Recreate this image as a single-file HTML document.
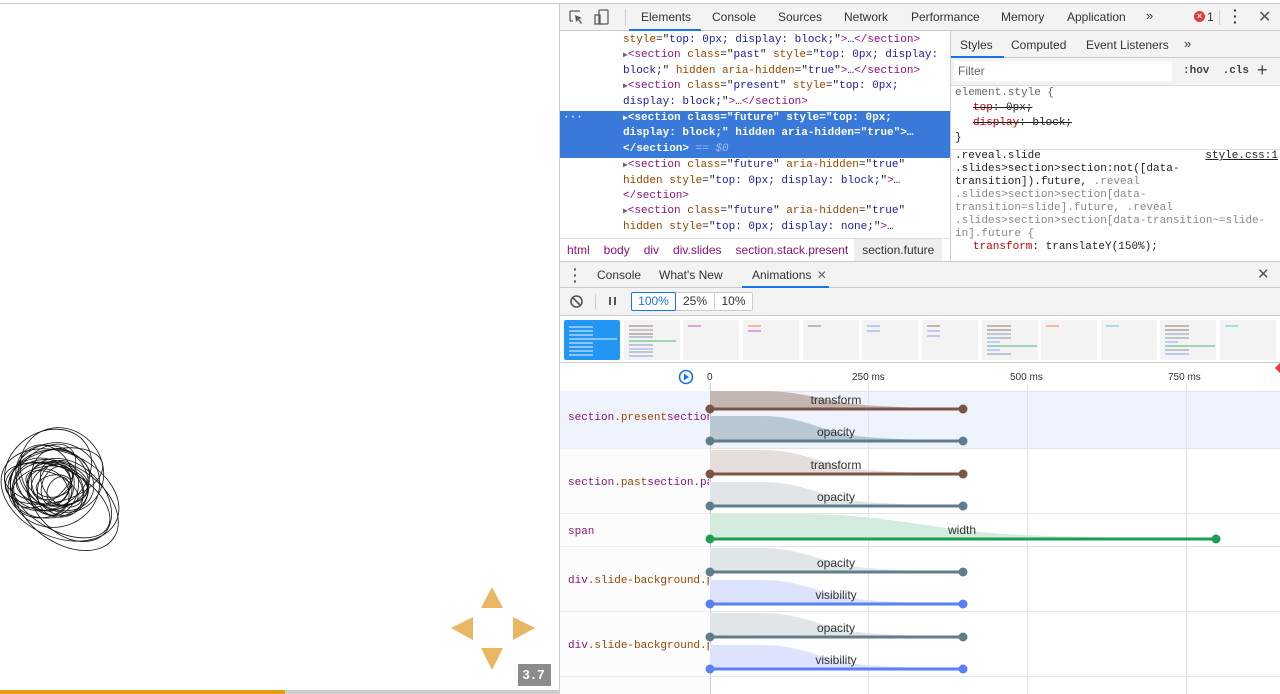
<!DOCTYPE html>
<html><head><meta charset="utf-8">
<style>
*{margin:0;padding:0;box-sizing:border-box}
body{width:1280px;height:694px;overflow:hidden;position:relative;background:#fff;font-family:"Liberation Sans",sans-serif;font-size:12px;color:#333}
.a{position:absolute}
.mono{font-family:"Liberation Mono",monospace;font-size:11px}
.tag{color:#881280}.at{color:#994500}.av{color:#1a1aa6}
.tab{position:absolute;top:10px;font-size:12px;color:#333}
.pv{position:absolute;top:320px;width:56px;height:40px;background:#f3f3f3;border-radius:2px}
.pv i{position:absolute;left:5px;height:2px;display:block}
</style></head><body>
<div class="a" style="left:0;top:3px;width:1280px;height:1px;background:#ccc"></div>

<svg class="a" style="left:0;top:420px" width="140" height="145" viewBox="0 420 140 145" fill="none" stroke="#111" stroke-width="0.8">
<ellipse cx="55" cy="485" rx="45" ry="42" transform="rotate(-20 55 485)"/>
<ellipse cx="60" cy="495" rx="62" ry="42" transform="rotate(25 60 495)"/>
<ellipse cx="50" cy="480" rx="40" ry="30" transform="rotate(-10 50 480)"/>
<ellipse cx="55" cy="490" rx="30" ry="25" transform="rotate(40 55 490)"/>
<ellipse cx="48" cy="470" rx="46" ry="38" transform="rotate(-35 48 470)"/>
<ellipse cx="58" cy="488" rx="20" ry="28" transform="rotate(15 58 488)"/>
<ellipse cx="52" cy="484" rx="36" ry="22" transform="rotate(5 52 484)"/>
<ellipse cx="60" cy="500" rx="55" ry="30" transform="rotate(30 60 500)"/>
<ellipse cx="45" cy="478" rx="28" ry="34" transform="rotate(-25 45 478)"/>
<ellipse cx="56" cy="486" rx="14" ry="20" transform="rotate(20 56 486)"/>
<ellipse cx="50" cy="492" rx="38" ry="26" transform="rotate(-5 50 492)"/>
<ellipse cx="62" cy="484" rx="26" ry="18" transform="rotate(50 62 484)"/>
<ellipse cx="54" cy="476" rx="50" ry="26" transform="rotate(-15 54 476)"/>
<ellipse cx="40" cy="488" rx="32" ry="30"/>
<ellipse cx="58" cy="490" rx="10" ry="14" transform="rotate(30 58 490)"/>
<ellipse cx="52" cy="482" rx="22" ry="16" transform="rotate(-30 52 482)"/>
<ellipse cx="66" cy="505" rx="58" ry="38" transform="rotate(35 66 505)"/>
<ellipse cx="46" cy="484" rx="42" ry="20" transform="rotate(10 46 484)"/>
<ellipse cx="62" cy="470" rx="40" ry="44" transform="rotate(-40 62 470)"/>
<ellipse cx="48" cy="492" rx="24" ry="20" transform="rotate(60 48 492)"/>
<ellipse cx="54" cy="486" rx="18" ry="11" transform="rotate(-10 54 486)"/>
<ellipse cx="60" cy="482" rx="34" ry="28" transform="rotate(70 60 482)"/>
<ellipse cx="44" cy="476" rx="38" ry="24" transform="rotate(-45 44 476)"/>
<ellipse cx="70" cy="500" rx="48" ry="34" transform="rotate(45 70 500)"/>
<ellipse cx="52" cy="488" rx="28" ry="14" transform="rotate(25 52 488)"/>
<ellipse cx="56" cy="478" rx="30" ry="40" transform="rotate(-60 56 478)"/>
</svg>
<svg class="a" style="left:450px;top:586px" width="90" height="86">
<polygon points="42,1 53,22 31,22" fill="#e9b764"/>
<polygon points="1,42 23,31 23,54" fill="#e9b764"/>
<polygon points="85,42 63,31 63,54" fill="#e9b764"/>
<polygon points="31,62 53,62 42,84" fill="#e9b764"/>
</svg>
<div class="a" style="left:518px;top:664px;width:33px;height:22px;background:#8c8c8c;color:#fff;font-weight:bold;font-size:13px;text-align:center;line-height:22px;letter-spacing:2px">3.7</div>
<div class="a" style="left:0;top:690px;width:285px;height:4px;background:#e39d12"></div>
<div class="a" style="left:285px;top:690px;width:274px;height:4px;background:#ccc"></div>

<div class="a" style="left:559px;top:4px;width:721px;height:690px;background:#fff;border-left:1px solid #ccc"></div>
<div class="a" style="left:560px;top:4px;width:720px;height:27px;background:#f3f3f3;border-bottom:1px solid #ccc"></div>
<svg class="a" style="left:568px;top:9px" width="44" height="18" fill="none" stroke="#5a5a5a" stroke-width="1.3">
<path d="M2 2h10M2 2v10M2 12h3" /><path d="M7 6l7 3-3 1 3 4-1 1-3-4-2 2z" fill="#5a5a5a" stroke="none"/>
<rect x="31" y="1" width="9" height="14" rx="1"/><rect x="27" y="6" width="5" height="9"/>
</svg>
<div class="a" style="left:625px;top:9px;width:1px;height:17px;background:#ccc"></div>
<div class="tab" style="left:641px">Elements</div>
<div class="a" style="left:629px;top:29px;width:72px;height:2px;background:#1a73e8"></div>
<div class="tab" style="left:712px">Console</div>
<div class="tab" style="left:778px">Sources</div>
<div class="tab" style="left:844px">Network</div>
<div class="tab" style="left:911px">Performance</div>
<div class="tab" style="left:1001px">Memory</div>
<div class="tab" style="left:1067px">Application</div>
<div class="tab" style="left:1146px;font-size:13px;top:8px">»</div>
<div class="a" style="left:1194px;top:11px;width:11px;height:11px;border-radius:50%;background:#e53935;color:#fff;font-size:9px;line-height:11px;text-align:center;font-weight:bold">×</div>
<div class="tab" style="left:1207px">1</div>
<div class="a" style="left:1219px;top:10px;width:1px;height:15px;background:#ccc"></div>
<div class="tab" style="left:1233px;font-weight:bold;font-size:14px;top:7px;line-height:6px">·<br>·<br>·</div>
<div class="tab" style="left:1258px;font-size:16px;top:7px;color:#555">✕</div>

<div class="a mono" style="left:560px;top:33px;width:390px;line-height:15.4px;color:#222">
<div style="padding-left:63px"><span class="at">style</span>="<span class="av">top: 0px; display: block;</span>"<span class="tag">&gt;</span>…<span class="tag">&lt;/section&gt;</span></div>
<div style="padding-left:63px"><span style="color:#666;font-size:8px">▶</span><span class="tag">&lt;section</span> <span class="at">class</span>="<span class="av">past</span>" <span class="at">style</span>="<span class="av">top: 0px; display:</span></div>
<div style="padding-left:63px"><span class="av">block;</span>" <span class="at">hidden aria-hidden</span>="<span class="av">true</span>"<span class="tag">&gt;</span>…<span class="tag">&lt;/section&gt;</span></div>
<div style="padding-left:63px"><span style="color:#666;font-size:8px">▶</span><span class="tag">&lt;section</span> <span class="at">class</span>="<span class="av">present</span>" <span class="at">style</span>="<span class="av">top: 0px;</span></div>
<div style="padding-left:63px"><span class="av">display: block;</span>"<span class="tag">&gt;</span>…<span class="tag">&lt;/section&gt;</span></div>
<div style="background:#3879d9;color:#fff;font-weight:bold;margin-top:1px;padding-bottom:1px">
<div style="padding-left:63px;position:relative"><span style="position:absolute;left:3px;font-weight:normal">···</span><span style="font-size:8px">▶</span>&lt;section class="future" style="top: 0px;</div>
<div style="padding-left:63px">display: block;" hidden aria-hidden="true"&gt;…</div>
<div style="padding-left:63px">&lt;/section&gt; <span style="color:#9ec1f5;font-weight:normal">== <i>$0</i></span></div></div>
<div style="padding-left:63px"><span style="color:#666;font-size:8px">▶</span><span class="tag">&lt;section</span> <span class="at">class</span>="<span class="av">future</span>" <span class="at">aria-hidden</span>="<span class="av">true</span>"</div>
<div style="padding-left:63px"><span class="at">hidden style</span>="<span class="av">top: 0px; display: block;</span>"<span class="tag">&gt;</span>…</div>
<div style="padding-left:63px"><span class="tag">&lt;/section&gt;</span></div>
<div style="padding-left:63px"><span style="color:#666;font-size:8px">▶</span><span class="tag">&lt;section</span> <span class="at">class</span>="<span class="av">future</span>" <span class="at">aria-hidden</span>="<span class="av">true</span>"</div>
<div style="padding-left:63px"><span class="at">hidden style</span>="<span class="av">top: 0px; display: none;</span>"<span class="tag">&gt;</span>…</div>
</div>
<div class="a" style="left:560px;top:238px;width:390px;height:23px;background:#fff;border-top:1px solid #ddd;font-size:12px;line-height:22px;color:#881280;white-space:nowrap">
<span style="margin-left:7px">html</span><span style="margin-left:14px">body</span><span style="margin-left:14px">div</span><span style="margin-left:14px">div.slides</span><span style="margin-left:14px">section.stack.present</span><span style="margin-left:6px;background:#eee;color:#333;padding:4px 8px">section.future</span></div>

<div class="a" style="left:950px;top:31px;width:1px;height:230px;background:#ccc"></div>
<div class="a" style="left:951px;top:31px;width:329px;height:27px;background:#f3f3f3;border-bottom:1px solid #ccc"></div>
<div class="tab" style="left:960px;top:38px">Styles</div>
<div class="a" style="left:951px;top:56px;width:53px;height:2px;background:#1a73e8"></div>
<div class="tab" style="left:1011px;top:38px">Computed</div>
<div class="tab" style="left:1086px;top:38px">Event Listeners</div>
<div class="tab" style="left:1184px;top:36px;font-size:13px">»</div>
<div class="a" style="left:951px;top:58px;width:329px;height:28px;background:#f3f3f3;border-bottom:1px solid #ddd"></div>
<div class="a" style="left:954px;top:61px;width:218px;height:20px;background:#fff;color:#666;line-height:20px;padding-left:4px">Filter</div>
<div class="a mono" style="left:1183px;top:65px;font-weight:bold;color:#444">:hov&nbsp;&nbsp;.cls</div>
<div class="a" style="left:1257px;top:60px;font-size:18px;color:#444">+</div>
<div class="a mono" style="left:955px;top:86px;width:325px;line-height:15px;color:#222">
<div style="color:#666">element.style {</div>
<div style="padding-left:18px;text-decoration:line-through"><span style="color:#c80000">top</span>: 0px;</div>
<div style="padding-left:18px;text-decoration:line-through"><span style="color:#c80000">display</span>: block;</div>
<div>}</div>
</div>
<div class="a" style="left:951px;top:149px;width:329px;height:1px;background:#ddd"></div>
<div class="a mono" style="left:955px;top:150px;width:325px;line-height:13px;color:#222">
<div>.reveal.slide<span style="float:right;text-decoration:underline;margin-right:2px">style.css:1</span></div>
<div>.slides&gt;section&gt;section:not([data-</div>
<div>transition]).future, <span style="color:#888">.reveal</span></div>
<div style="color:#888">.slides&gt;section&gt;section[data-</div>
<div style="color:#888">transition=slide].future, .reveal</div>
<div style="color:#888">.slides&gt;section&gt;section[data-transition~=slide-</div>
<div style="color:#888">in].future {</div>
<div style="padding-left:18px"><span style="color:#c80000">transform</span>: translateY(150%);</div>
</div>

<div class="a" style="left:560px;top:261px;width:720px;height:27px;background:#f3f3f3;border-top:1px solid #ccc;border-bottom:1px solid #ccc"></div>
<div class="a" style="left:573px;top:266px;font-weight:bold;font-size:14px;line-height:6px;color:#555">·<br>·<br>·</div>
<div class="tab" style="left:597px;top:268px">Console</div>
<div class="tab" style="left:659px;top:268px">What's New</div>
<div class="tab" style="left:752px;top:268px">Animations <span style="color:#666;margin-left:2px">✕</span></div>
<div class="a" style="left:742px;top:286px;width:87px;height:2px;background:#1a73e8"></div>
<div class="a" style="left:1257px;top:265px;font-size:15px;color:#555">✕</div>
<div class="a" style="left:560px;top:288px;width:720px;height:28px;background:#f3f3f3;border-bottom:1px solid #ccc"></div>
<svg class="a" style="left:569px;top:294px" width="16" height="16" fill="none" stroke="#555" stroke-width="1.6"><circle cx="7.5" cy="7.5" r="5.5"/><path d="M3.5 3.5l8 8"/></svg>
<div class="a" style="left:595px;top:294px;width:1px;height:15px;background:#ccc"></div>
<div class="a" style="left:609px;top:297px;width:2px;height:8px;background:#555"></div>
<div class="a" style="left:614px;top:297px;width:2px;height:8px;background:#555"></div>
<div class="a" style="left:631px;top:292px;width:122px;height:19px;border:1px solid #ccc;border-radius:2px;background:#fff"></div>
<div class="a" style="left:631px;top:292px;width:45px;height:19px;border:1px solid #1a73e8;border-radius:2px;color:#1a73e8;text-align:center;line-height:17px">100%</div>
<div class="a" style="left:676px;top:293px;width:39px;line-height:17px;text-align:center;border-right:1px solid #ccc">25%</div>
<div class="a" style="left:715px;top:293px;width:37px;line-height:17px;text-align:center">10%</div>

<div class="pv" style="left:564px;background:#2196f3"><i style="top:6px;width:24px;background:#8cc4f7"></i><i style="top:10px;width:24px;background:#8cc4f7"></i><i style="top:14px;width:24px;background:#8cc4f7"></i><i style="top:18px;width:48px;background:#8cc4f7"></i><i style="top:22px;width:24px;background:#8cc4f7"></i><i style="top:26px;width:24px;background:#8cc4f7"></i><i style="top:30px;width:24px;background:#8cc4f7"></i><i style="top:34px;width:24px;background:#8cc4f7"></i></div>
<div class="pv" style="left:624px"><i style="top:5px;width:24px;background:#c4b5b0"></i><i style="top:9px;width:24px;background:#bcc6cc"></i><i style="top:13px;width:24px;background:#c4b5b0"></i><i style="top:16px;width:24px;background:#bcc6cc"></i><i style="top:20px;width:47px;background:#9fd5b5"></i><i style="top:24px;width:24px;background:#bcc6cc"></i><i style="top:28px;width:24px;background:#bfc9f7"></i><i style="top:31px;width:24px;background:#bcc6cc"></i><i style="top:35px;width:24px;background:#bfc9f7"></i></div>
<div class="pv" style="left:683px"><i style="top:5px;width:13px;background:#d7a6dc"></i></div>
<div class="pv" style="left:743px"><i style="top:5px;width:13px;background:#f7b7a6"></i><i style="top:10px;width:13px;background:#d7a6dc"></i></div>
<div class="pv" style="left:803px"><i style="top:5px;width:13px;background:#c4b5b0"></i></div>
<div class="pv" style="left:862px"><i style="top:5px;width:13px;background:#bfc9f7"></i><i style="top:10px;width:13px;background:#bfc9f7"></i></div>
<div class="pv" style="left:922px"><i style="top:5px;width:13px;background:#c4b5b0"></i><i style="top:10px;width:13px;background:#bfc9f7"></i><i style="top:15px;width:13px;background:#bfc9f7"></i></div>
<div class="pv" style="left:982px"><i style="top:5px;width:24px;background:#c4b5b0"></i><i style="top:9px;width:24px;background:#c4b5b0"></i><i style="top:13px;width:24px;background:#bcc6cc"></i><i style="top:17px;width:24px;background:#bcc6cc"></i><i style="top:21px;width:13px;background:#bfc9f7"></i><i style="top:25px;width:50px;background:#9fd5b5"></i><i style="top:29px;width:13px;background:#bfc9f7"></i><i style="top:33px;width:24px;background:#bcc6cc"></i></div>
<div class="pv" style="left:1041px"><i style="top:5px;width:13px;background:#f7b7a6"></i></div>
<div class="pv" style="left:1101px"><i style="top:5px;width:13px;background:#a6dce4"></i></div>
<div class="pv" style="left:1160px"><i style="top:5px;width:24px;background:#c4b5b0"></i><i style="top:9px;width:24px;background:#c4b5b0"></i><i style="top:13px;width:24px;background:#bcc6cc"></i><i style="top:17px;width:24px;background:#bcc6cc"></i><i style="top:21px;width:13px;background:#bfc9f7"></i><i style="top:25px;width:50px;background:#9fd5b5"></i><i style="top:29px;width:24px;background:#bcc6cc"></i><i style="top:33px;width:24px;background:#bfc9f7"></i></div>
<div class="pv" style="left:1220px"><i style="top:5px;width:13px;background:#a6dce4"></i></div>
<div class="a" style="left:560px;top:362px;width:720px;height:1px;background:#ccc"></div>

<svg class="a" style="left:560px;top:363px" width="720" height="331" viewBox="560 363 720 331" font-family="Liberation Sans, sans-serif" font-size="11">
<rect x="560" y="391" width="720" height="57" fill="#eef3fd"/>
<g stroke="#e4e4e4" stroke-width="1">
<line x1="868.5" y1="383" x2="868.5" y2="694"/><line x1="1027.5" y1="383" x2="1027.5" y2="694"/><line x1="1186.5" y1="383" x2="1186.5" y2="694"/>
<line x1="560" y1="391.5" x2="1280" y2="391.5"/>
<line x1="560" y1="448.5" x2="1280" y2="448.5"/><line x1="560" y1="513.5" x2="1280" y2="513.5"/><line x1="560" y1="546.5" x2="1280" y2="546.5"/><line x1="560" y1="611.5" x2="1280" y2="611.5"/><line x1="560" y1="676.5" x2="1280" y2="676.5"/>
</g>
<line x1="710.5" y1="383" x2="710.5" y2="694" stroke="#ccc"/>
<rect x="560" y="391" width="150" height="303" fill="#f9f9f9" opacity="0.5"/>
<rect x="560" y="391" width="150" height="57" fill="#eef3fd"/>
<circle cx="686" cy="377" r="6.5" fill="none" stroke="#1a73e8" stroke-width="1.6"/><path d="M684 373.5l5 3.5-5 3.5z" fill="#1a73e8"/>
<g fill="#333" font-size="10"><text x="707" y="380">0</text><text x="852" y="380">250 ms</text><text x="1010" y="380">500 ms</text><text x="1168" y="380">750 ms</text></g>
<path d="M1280 363l-5 5 5 5z" fill="#e53935"/>

<path d="M710 409V391H760C810 391 820 403 880 406S940 409 963 409Z" fill="#c6b6b2"/>
<path d="M710 441V416H760C810 416 820 435 880 438S940 441 963 441Z" fill="#b8c8d3"/>
<path d="M710 474V450H760C810 450 820 468 880 471S940 474 963 474Z" fill="#e6dedb"/>
<path d="M710 506V482H760C810 482 820 500 880 503S940 506 963 506Z" fill="#e0e5e8"/>
<path d="M710 539V514H800C900 514 930 533 1050 536S1180 539 1216 539Z" fill="#d3ecdd"/>
<path d="M710 572V548H760C810 548 820 566 880 569S940 572 963 572Z" fill="#e0e5e8"/>
<path d="M710 604V580H760C810 580 820 598 880 601S940 604 963 604Z" fill="#dde3fd"/>
<path d="M710 637V613H760C810 613 820 631 880 634S940 637 963 637Z" fill="#e0e5e8"/>
<path d="M710 669V645H760C810 645 820 663 880 666S940 669 963 669Z" fill="#dde3fd"/>
<g stroke-width="3">
<line x1="710" y1="409" x2="963" y2="409" stroke="#795548"/>
<line x1="710" y1="441" x2="963" y2="441" stroke="#607d8b"/>
<line x1="710" y1="474" x2="963" y2="474" stroke="#795548"/>
<line x1="710" y1="506" x2="963" y2="506" stroke="#607d8b"/>
<line x1="710" y1="539" x2="1216" y2="539" stroke="#1e9e55"/>
<line x1="710" y1="572" x2="963" y2="572" stroke="#607d8b"/>
<line x1="710" y1="604" x2="963" y2="604" stroke="#5b7ff5"/>
<line x1="710" y1="637" x2="963" y2="637" stroke="#607d8b"/>
<line x1="710" y1="669" x2="963" y2="669" stroke="#5b7ff5"/>
</g>
<g>
<circle cx="710" cy="409" r="4.5" fill="#795548"/><circle cx="963" cy="409" r="4.5" fill="#795548"/>
<circle cx="710" cy="441" r="4.5" fill="#607d8b"/><circle cx="963" cy="441" r="4.5" fill="#607d8b"/>
<circle cx="710" cy="474" r="4.5" fill="#795548"/><circle cx="963" cy="474" r="4.5" fill="#795548"/>
<circle cx="710" cy="506" r="4.5" fill="#607d8b"/><circle cx="963" cy="506" r="4.5" fill="#607d8b"/>
<circle cx="710" cy="539" r="4.5" fill="#1e9e55"/><circle cx="1216" cy="539" r="4.5" fill="#1e9e55"/>
<circle cx="710" cy="572" r="4.5" fill="#607d8b"/><circle cx="963" cy="572" r="4.5" fill="#607d8b"/>
<circle cx="710" cy="604" r="4.5" fill="#5b7ff5"/><circle cx="963" cy="604" r="4.5" fill="#5b7ff5"/>
<circle cx="710" cy="637" r="4.5" fill="#607d8b"/><circle cx="963" cy="637" r="4.5" fill="#607d8b"/>
<circle cx="710" cy="669" r="4.5" fill="#5b7ff5"/><circle cx="963" cy="669" r="4.5" fill="#5b7ff5"/>
</g>
<g fill="#333" font-size="12" text-anchor="middle">
<text x="836" y="404">transform</text><text x="836" y="436">opacity</text>
<text x="836" y="469">transform</text><text x="836" y="501">opacity</text>
<text x="962" y="534">width</text>
<text x="836" y="567">opacity</text><text x="836" y="599">visibility</text>
<text x="836" y="632">opacity</text><text x="836" y="664">visibility</text>
</g>
<g font-family="Liberation Mono, monospace" font-size="11">
<svg x="560" y="391" width="149" height="300" viewBox="560 391 149 300" overflow="hidden">
<text x="568" y="420"><tspan fill="#881280">section</tspan><tspan fill="#994500">.present</tspan><tspan fill="#881280">section</tspan></text>
<text x="568" y="485"><tspan fill="#881280">section</tspan><tspan fill="#994500">.past</tspan><tspan fill="#881280">section.pa</tspan></text>
<text x="568" y="534" fill="#881280">span</text>
<text x="568" y="583"><tspan fill="#881280">div</tspan><tspan fill="#994500">.slide-background.p</tspan></text>
<text x="568" y="648"><tspan fill="#881280">div</tspan><tspan fill="#994500">.slide-background.p</tspan></text>
</svg>
</g>
</svg>
</body></html>
